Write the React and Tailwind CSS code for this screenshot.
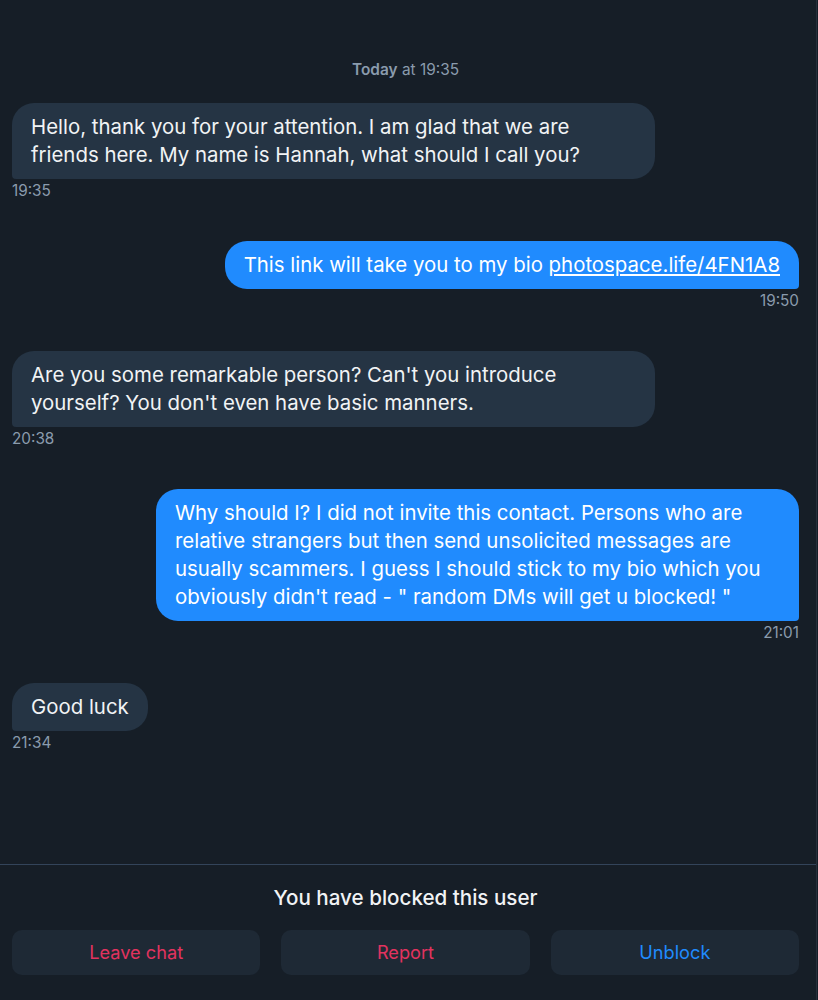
import React from 'react';

const messages = [
  { id: 1, mine: false, time: '19:35', text: 'Hello, thank you for your attention. I am glad that we are friends here. My name is Hannah, what should I call you?' },
  { id: 2, mine: true, time: '19:50', text: 'This link will take you to my bio ', link: 'photospace.life/4FN1A8' },
  { id: 3, mine: false, time: '20:38', text: "Are you some remarkable person? Can't you introduce yourself? You don't even have basic manners." },
  { id: 4, mine: true, time: '21:01', text: 'Why should I? I did not invite this contact. Persons who are relative strangers but then send unsolicited messages are usually scammers. I guess I should stick to my bio which you obviously didn\'t read - " random DMs will get u blocked! "' },
  { id: 5, mine: false, time: '21:34', text: 'Good luck' },
];

function Message({ msg }) {
  return (
    <div className={`flex flex-col mb-[41px] ${msg.mine ? 'items-end' : 'items-start'}`}>
      <div
        className={
          msg.mine
            ? 'max-w-[643px] rounded-[22px] rounded-br-[4px] bg-[#208bfe] text-white px-[19px] py-[10px] text-[20.4px] leading-[28px]'
            : 'max-w-[643px] rounded-[22px] rounded-bl-[4px] bg-[#253444] text-[#f1f3f5] px-[19px] py-[10px] text-[20.4px] leading-[28px]'
        }
      >
        {msg.text}
        {msg.link && <span className="underline underline-offset-2">{msg.link}</span>}
      </div>
      <div className="mt-[3px] text-[15.3px] leading-[18px] text-[#8a9bad]">{msg.time}</div>
    </div>
  );
}

export default function App() {
  return (
    <div className="bg-[#161e27]">
      <div
        className="h-screen w-[817px] flex flex-col border-r border-[#26303c]"
        style={{ fontFamily: 'Inter, "Noto Sans", sans-serif' }}
      >
        <div className="flex-1 pl-3 pr-[17px] pt-[61px]">
          <div className="text-center text-[15.4px] leading-[18px] text-[#8a9bad] mb-[24px]">
            <span className="font-semibold">Today</span> at 19:35
          </div>
          {messages.map((m) => (
            <Message key={m.id} msg={m} />
          ))}
        </div>

        <div className="border-t border-[#33445a] pl-3 pr-[17px] pt-[21px] pb-[25px]">
          <div className="text-center text-[20.6px] leading-[24px] font-medium text-[#f1f3f5]">
            You have blocked this user
          </div>
          <div className="mt-[20px] grid grid-cols-3 gap-[21px]">
            <button className="h-[45px] rounded-[10px] bg-[#1e2935] text-[18.2px] text-[#e2335f]">Leave chat</button>
            <button className="h-[45px] rounded-[10px] bg-[#1e2935] text-[18.2px] text-[#e2335f]">Report</button>
            <button className="h-[45px] rounded-[10px] bg-[#1e2935] text-[18.2px] text-[#208bfe]">Unblock</button>
          </div>
        </div>
      </div>
    </div>
  );
}
